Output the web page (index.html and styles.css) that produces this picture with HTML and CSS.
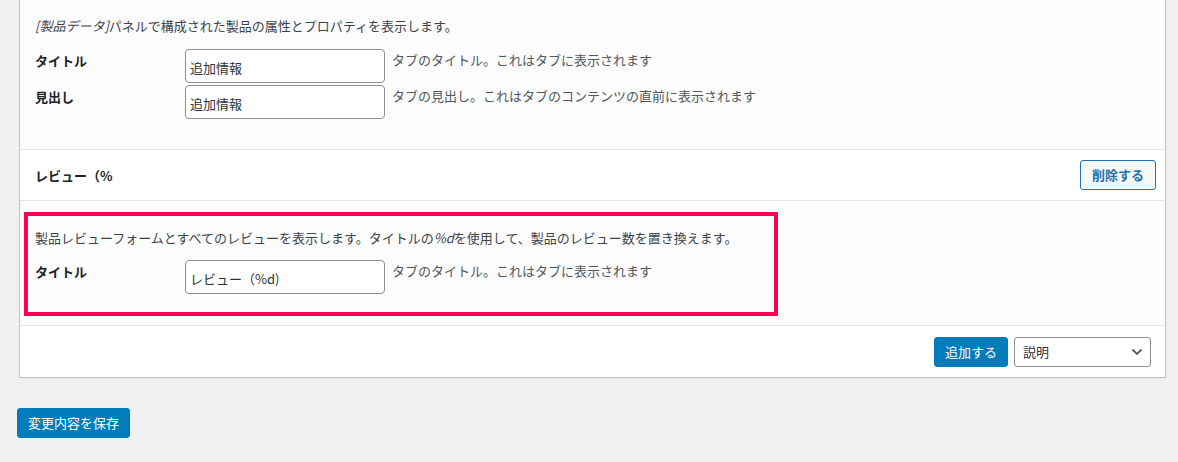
FILE: index.html
```html
<!DOCTYPE html>
<html lang="ja">
<head>
	<meta charset="utf-8">
	<meta name="viewport" content="width=device-width, initial-scale=1">
	<link rel="stylesheet" href="styles.css">
</head>
<body>
	<div class="wrap">
		<div class="panel">
			<div class="tab-body">
				<p class="tab-desc"><em>[製品データ]</em>パネルで構成された製品の属性とプロパティを表示します。</p>
				<div class="field-row">
					<label class="field-label">タイトル</label>
					<input class="field-input" type="text" value="追加情報">
					<span class="field-help">タブのタイトル。これはタブに表示されます</span>
				</div>
				<div class="field-row">
					<label class="field-label">見出し</label>
					<input class="field-input" type="text" value="追加情報">
					<span class="field-help">タブの見出し。これはタブのコンテンツの直前に表示されます</span>
				</div>
			</div>

			<div class="tab-head">
				<h3 class="tab-title">レビュー（%</h3>
				<button class="button button-secondary">削除する</button>
			</div>

			<div class="tab-body tab-body-marked">
				<div class="highlight">
					<p class="tab-desc">製品レビューフォームとすべてのレビューを表示します。タイトルの<em>%d</em>を使用して、製品のレビュー数を置き換えます。</p>
					<div class="field-row">
						<label class="field-label">タイトル</label>
						<input class="field-input" type="text" value="レビュー（%d)">
						<span class="field-help">タブのタイトル。これはタブに表示されます</span>
					</div>
				</div>
			</div>

			<div class="panel-foot">
				<button class="button button-primary">追加する</button>
				<div class="select-wrap">
					<select class="tab-select">
						<option>説明</option>
					</select>
					<svg class="select-arrow" width="12" height="8" viewBox="0 0 12 8">
						<path d="M1.5 1.5 L6 6 L10.5 1.5" fill="none" stroke="#50575e" stroke-width="1.8"/>
					</svg>
				</div>
			</div>
		</div>

		<div class="save-bar">
			<button class="button button-primary button-save">変更内容を保存</button>
		</div>
	</div>
</body>
</html>
```

FILE: styles.css
```css
body {
	margin: 0;
	background-color: #f0f0f1;
	font-family: "Noto Sans CJK JP", "Noto Sans", sans-serif;
	font-size: 13px;
	color: #3c434a;
}

.wrap {
	padding: 0 12px 0 19px;
}

.panel {
	width: 1145px;
	border: 1px solid #c3c4c7;
	border-top: 0;
	background-color: #fff;
	box-shadow: 0 1px 1px rgba(0, 0, 0, 0.04);
}

/* tab sections */
.tab-body {
	padding: 16px 15px 28px;
	background-color: #fcfcfc;
}

.tab-desc {
	margin: 0 0 13px;
	line-height: 20px;
}

.tab-desc em {
	font-style: italic;
}

.field-row {
	display: flex;
	align-items: flex-start;
	margin-bottom: 2px;
}

.field-label {
	width: 150px;
	flex-shrink: 0;
	padding-top: 2px;
	line-height: 20px;
	font-weight: bold;
	color: #1d2327;
}

.field-input {
	box-sizing: border-box;
	width: 200px;
	height: 34px;
	margin: 0;
	padding: 2px 4px 0;
	border: 1px solid #8c8f94;
	border-radius: 4px;
	background-color: #fff;
	font-family: inherit;
	font-size: 13px;
	color: #2c3338;
}

.field-help {
	margin-left: 7px;
	padding-top: 1px;
	line-height: 20px;
	color: #50575e;
}

.tab-head {
	display: flex;
	align-items: center;
	justify-content: space-between;
	height: 50px;
	padding: 0 9px 0 15px;
	border-top: 1px solid #e6e6e6;
	border-bottom: 1px solid #e6e6e6;
	background-color: #fff;
}

.tab-title {
	margin: 0;
	font-size: 13px;
	font-weight: bold;
	color: #1d2327;
}

/* marked block */
.tab-body-marked {
	padding: 11px 387px 9px 4px;
}

.highlight {
	padding: 12px 7px 18px;
	border: 4px solid #ff0052;
}

.highlight .tab-desc {
	margin-bottom: 12px;
}

.highlight .field-row {
	margin-bottom: 0;
}

/* footer */
.panel-foot {
	display: flex;
	align-items: center;
	justify-content: flex-end;
	gap: 6px;
	height: 51px;
	padding: 0 14px 0 15px;
	border-top: 1px solid #e6e6e6;
	background-color: #fff;
}

.button {
	box-sizing: border-box;
	height: 30px;
	margin: 0;
	padding: 0 10px;
	border-radius: 3px;
	font-family: inherit;
	font-size: 13px;
	line-height: 28px;
	cursor: pointer;
}

.button-primary {
	border: 1px solid #007cba;
	background-color: #007cba;
	color: #fff;
}

.button-secondary {
	border: 1px solid #2271b1;
	background-color: #f6f7f7;
	color: #2271b1;
	font-weight: 600;
	padding: 0 11px;
}

.select-wrap {
	position: relative;
	width: 137px;
}

.tab-select {
	box-sizing: border-box;
	width: 100%;
	height: 30px;
	padding: 0 24px 0 8px;
	border: 1px solid #8c8f94;
	border-radius: 3px;
	background-color: #fff;
	font-family: inherit;
	font-size: 13px;
	color: #2c3338;
	appearance: none;
	-webkit-appearance: none;
}

.select-arrow {
	position: absolute;
	right: 8px;
	top: 11px;
	pointer-events: none;
}

.save-bar {
	margin-top: 30px;
	margin-left: -2px;
}

.button-save {
	width: 113px;
	padding: 0;
}
```
